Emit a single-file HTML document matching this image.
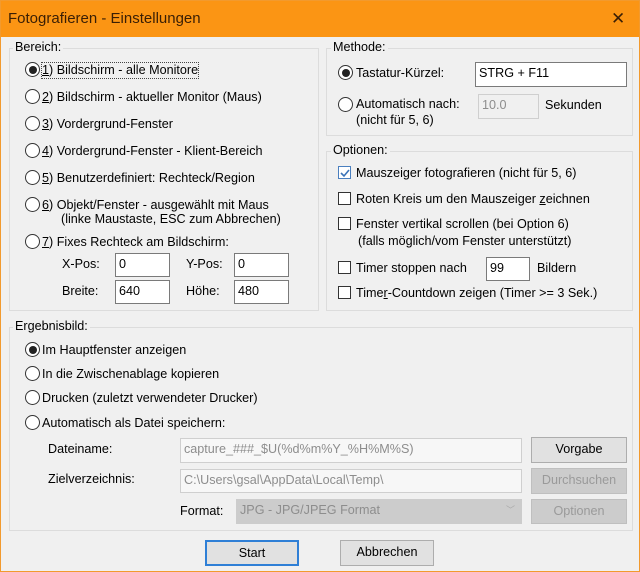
<!DOCTYPE html>
<html><head><meta charset="utf-8"><style>
*{box-sizing:border-box;margin:0;padding:0}
body{width:640px;height:572px;background:#f0f0f0;font-family:"Liberation Sans",sans-serif;font-size:12.6px;color:#000;position:relative;overflow:hidden}
.win{position:absolute;left:0;top:0;width:640px;height:572px;border:1px solid #f29a2e;}
.title{position:absolute;left:0;top:0;width:640px;height:37px;background:#fb9514;}
.title span{position:absolute;left:8px;top:10px;font-size:15px;color:#3a1f05}
.x{position:absolute;left:611px;top:9px;font-size:17px;color:#3a1f05}
.a{position:absolute;white-space:nowrap;line-height:15px}
.g{position:absolute;border:1px solid #dcdcdc}
.gl{position:absolute;background:#f0f0f0;padding:0 2px;line-height:15px;white-space:nowrap}
.r{position:absolute;width:15px;height:15px;border:1px solid #333;border-radius:50%;background:#fff}
.r.on::after{content:"";position:absolute;left:2.5px;top:2.5px;width:8px;height:8px;border-radius:50%;background:#222}
.c{position:absolute;width:13px;height:13px;border:1px solid #333;background:#fff}
.in{position:absolute;background:#fff;border:1px solid #7a7a7a;padding:2px 3px;line-height:17px;white-space:nowrap}
.dis{background:#f0f0f0;border-color:#cfcfcf;color:#8d8d8d}
.btn{position:absolute;background:#e1e1e1;border:1px solid #adadad;text-align:center;line-height:23px}
.btn.d{background:#cccccc;border-color:#bfbfbf;color:#9a9a9a}
u{text-decoration:underline}
</style></head><body>
<div class="title"><span>Fotografieren - Einstellungen</span><div class="x">✕</div></div>
<div class="win"></div>

<div class="g" style="left:9px;top:48px;width:310px;height:263px"></div>
<div class="gl" style="left:13px;top:40px">Bereich:</div>
<div class="r on" style="left:25px;top:62px"></div><div class="a" style="left:42px;top:63px;outline:1px dotted #444"><u>1</u>) Bildschirm - alle Monitore</div>
<div class="r" style="left:25px;top:89px"></div><div class="a" style="left:42px;top:90px"><u>2</u>) Bildschirm - aktueller Monitor (Maus)</div>
<div class="r" style="left:25px;top:116px"></div><div class="a" style="left:42px;top:117px"><u>3</u>) Vordergrund-Fenster</div>
<div class="r" style="left:25px;top:143px"></div><div class="a" style="left:42px;top:144px"><u>4</u>) Vordergrund-Fenster - Klient-Bereich</div>
<div class="r" style="left:25px;top:170px"></div><div class="a" style="left:42px;top:171px"><u>5</u>) Benutzerdefiniert: Rechteck/Region</div>
<div class="r" style="left:25px;top:197px"></div><div class="a" style="left:42px;top:198px"><u>6</u>) Objekt/Fenster - ausgewählt mit Maus</div>
<div class="a" style="left:61px;top:212px">(linke Maustaste, ESC zum Abbrechen)</div>
<div class="r" style="left:25px;top:234px"></div><div class="a" style="left:42px;top:235px"><u>7</u>) Fixes Rechteck am Bildschirm:</div>
<div class="a" style="left:62px;top:257px">X-Pos:</div><div class="in" style="left:115px;top:253px;width:55px;height:24px">0</div>
<div class="a" style="left:186px;top:257px">Y-Pos:</div><div class="in" style="left:234px;top:253px;width:55px;height:24px">0</div>
<div class="a" style="left:62px;top:284px">Breite:</div><div class="in" style="left:115px;top:280px;width:55px;height:24px">640</div>
<div class="a" style="left:186px;top:284px">Höhe:</div><div class="in" style="left:234px;top:280px;width:55px;height:24px">480</div>

<div class="g" style="left:326px;top:48px;width:307px;height:88px"></div>
<div class="gl" style="left:331px;top:40px">Methode:</div>
<div class="r on" style="left:338px;top:65px"></div><div class="a" style="left:356px;top:66px">Tastatur-Kürzel:</div>
<div class="in" style="left:475px;top:62px;width:152px;height:25px">STRG + F11</div>
<div class="r" style="left:338px;top:97px"></div><div class="a" style="left:356px;top:97px">Automatisch nach:</div>
<div class="a" style="left:356px;top:113px">(nicht für 5, 6)</div>
<div class="in dis" style="left:478px;top:94px;width:61px;height:25px">10.0</div>
<div class="a" style="left:545px;top:98px">Sekunden</div>

<div class="g" style="left:326px;top:151px;width:307px;height:160px"></div>
<div class="gl" style="left:331px;top:143px">Optionen:</div>
<div class="c" style="left:338px;top:166px;border-color:#4a7fbf"></div>
<svg style="position:absolute;left:339px;top:167px" width="12" height="12"><path d="M2 6 L5 9 L10 3" stroke="#3a73b8" stroke-width="1.6" fill="none"/></svg>
<div class="a" style="left:356px;top:166px">Mauszeiger fotografieren (nicht für 5, 6)</div>
<div class="c" style="left:338px;top:192px"></div><div class="a" style="left:356px;top:192px">Roten Kreis um den Mauszeiger <u>z</u>eichnen</div>
<div class="c" style="left:338px;top:217px"></div><div class="a" style="left:356px;top:217px">Fenster vertikal scrollen (bei Option 6)</div>
<div class="a" style="left:358px;top:234px">(falls möglich/vom Fenster unterstützt)</div>
<div class="c" style="left:338px;top:261px"></div><div class="a" style="left:356px;top:261px">Timer stoppen nach</div>
<div class="in" style="left:486px;top:257px;width:44px;height:24px">99</div>
<div class="a" style="left:537px;top:261px">Bildern</div>
<div class="c" style="left:338px;top:286px"></div><div class="a" style="left:356px;top:286px">Time<u>r</u>-Countdown zeigen (Timer &gt;= 3 Sek.)</div>

<div class="g" style="left:9px;top:327px;width:624px;height:204px"></div>
<div class="gl" style="left:13px;top:319px">Ergebnisbild:</div>
<div class="r on" style="left:25px;top:342px"></div><div class="a" style="left:42px;top:343px">Im Hauptfenster anzeigen</div>
<div class="r" style="left:25px;top:366px"></div><div class="a" style="left:42px;top:367px">In die Zwischenablage kopieren</div>
<div class="r" style="left:25px;top:390px"></div><div class="a" style="left:42px;top:391px">Drucken (zuletzt verwendeter Drucker)</div>
<div class="r" style="left:25px;top:415px"></div><div class="a" style="left:42px;top:416px">Automatisch als Datei speichern:</div>
<div class="a" style="left:48px;top:442px">Dateiname:</div>
<div class="in dis" style="left:180px;top:438px;width:342px;height:25px;background:#f7f7f7">capture_###_$U(%d%m%Y_%H%M%S)</div>
<div class="btn" style="left:531px;top:437px;width:96px;height:26px">Vorgabe</div>
<div class="a" style="left:48px;top:472px">Zielverzeichnis:</div>
<div class="in dis" style="left:180px;top:469px;width:342px;height:24px;background:#f7f7f7">C:\Users\gsal\AppData\Local\Temp\</div>
<div class="btn d" style="left:531px;top:468px;width:96px;height:26px">Durchsuchen</div>
<div class="a" style="left:180px;top:504px">Format:</div>
<div class="in" style="left:236px;top:499px;width:286px;height:25px;background:#cccccc;border-color:#cccccc;color:#8d8d8d">JPG - JPG/JPEG Format<span style="position:absolute;right:6px;top:2px;font-size:9px;color:#aaa">﹀</span></div>
<div class="btn d" style="left:531px;top:499px;width:96px;height:25px">Optionen</div>

<div class="btn" style="left:205px;top:540px;width:94px;height:26px;border:2px solid #2f7fd6;line-height:22px">Start</div>
<div class="btn" style="left:340px;top:540px;width:94px;height:26px">Abbrechen</div>
</body></html>
